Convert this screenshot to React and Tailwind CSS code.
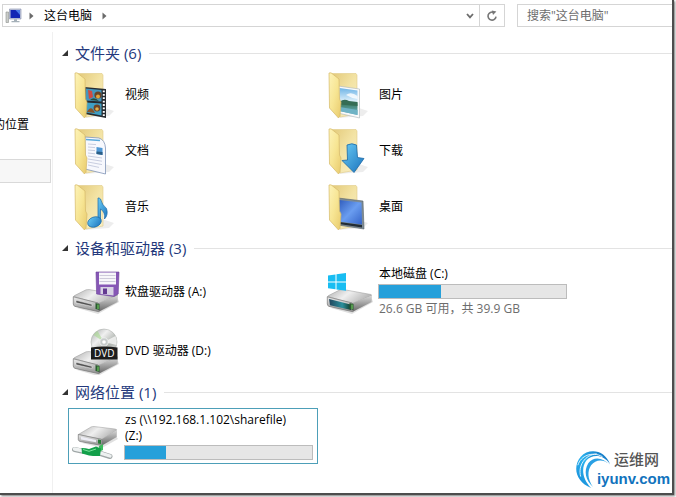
import React, { useState } from "react";

const folders = [
  { name: "视频", art: VideoArt },
  { name: "图片", art: PictureArt },
  { name: "文档", art: DocumentArt },
  { name: "下载", art: DownloadArt },
  { name: "音乐", art: MusicArt },
  { name: "桌面", art: DesktopArt },
];

// shared gradients, referenced by every icon below
function IconDefs() {
  return (
    <svg className="absolute h-0 w-0" aria-hidden="true">
      <defs>
        <linearGradient id="flap" x1="0" y1="0" x2="1" y2="1">
          <stop offset="0" stopColor="#fdf3b8" />
          <stop offset="0.5" stopColor="#f7e593" />
          <stop offset="1" stopColor="#e8ca6c" />
        </linearGradient>
        <linearGradient id="back" x1="0" y1="0" x2="1" y2="1">
          <stop offset="0" stopColor="#e2c877" />
          <stop offset="0.5" stopColor="#f3e3a4" />
          <stop offset="1" stopColor="#f8efc6" />
        </linearGradient>
        <linearGradient id="blue" x1="0" y1="0" x2="1" y2="1">
          <stop offset="0" stopColor="#6accf5" />
          <stop offset="1" stopColor="#1a72bd" />
        </linearGradient>
        <linearGradient id="screen" x1="0" y1="0" x2="1" y2="1">
          <stop offset="0" stopColor="#2f5cbc" />
          <stop offset="0.5" stopColor="#6a9df0" />
          <stop offset="1" stopColor="#3564c8" />
        </linearGradient>
        <linearGradient id="sky" x1="0" y1="0" x2="0" y2="1">
          <stop offset="0" stopColor="#6fb4e6" />
          <stop offset="0.5" stopColor="#dff1fb" />
          <stop offset="0.6" stopColor="#3f7f68" />
          <stop offset="1" stopColor="#6fb7cf" />
        </linearGradient>
        <linearGradient id="driveTop" x1="0" y1="0" x2="1" y2="0.4">
          <stop offset="0" stopColor="#b0b0b0" />
          <stop offset="0.5" stopColor="#efefef" />
          <stop offset="1" stopColor="#b5b5b5" />
        </linearGradient>
        <linearGradient id="driveSide" x1="0" y1="0" x2="0" y2="1">
          <stop offset="0" stopColor="#d8d8d8" />
          <stop offset="1" stopColor="#666" />
        </linearGradient>
        <linearGradient id="driveFront" x1="0" y1="0" x2="0" y2="1">
          <stop offset="0" stopColor="#ececec" />
          <stop offset="1" stopColor="#8e8e8e" />
        </linearGradient>
        <linearGradient id="systemFront" x1="0" y1="0" x2="1" y2="0">
          <stop offset="0" stopColor="#23455c" />
          <stop offset="0.6" stopColor="#2b8f9c" />
          <stop offset="1" stopColor="#123c2b" />
        </linearGradient>
        <linearGradient id="disc" x1="0" y1="0" x2="1" y2="1">
          <stop offset="0" stopColor="#9fa3a3" />
          <stop offset="0.35" stopColor="#f0f0f0" />
          <stop offset="0.65" stopColor="#b0b5b0" />
          <stop offset="1" stopColor="#e0e0e0" />
        </linearGradient>
        <linearGradient id="swirl" x1="1" y1="0" x2="0" y2="1">
          <stop offset="0" stopColor="#0d67b8" />
          <stop offset="0.5" stopColor="#2bb2ee" />
          <stop offset="1" stopColor="#1488d6" />
        </linearGradient>
      </defs>
    </svg>
  );
}

function FolderIcon({ children }) {
  return (
    <svg viewBox="0 0 48 48" className="h-12 w-12 shrink-0" aria-hidden="true">
      <path d="M13 47 L37 45 L42 40 L30 36 Z" fill="#000" opacity="0.07" />
      <path d="M4 2.5 L30 2.5 L31 4 L31 43 L14 46 Z" fill="url(#back)" stroke="#e0cb86" strokeWidth="0.6" />
      {children}
      <path d="M3 2 L5 1.8 L13 8 L13.5 28 L15 31 L14 45 L12.5 47 L3.5 37 Z" fill="url(#flap)" stroke="#d5b968" strokeWidth="0.7" />
    </svg>
  );
}

function VideoArt() {
  return (
    <g>
      <path d="M12 16 L34 18 L34 47 L13 43 Z" fill="#262b30" />
      <path d="M14 17.5 L29.5 19 L29.5 30.5 L14 29.5 Z" fill="#4596bd" />
      <path d="M14 31.5 L29.5 32.5 L29.5 44.5 L14 41.5 Z" fill="#3f9fc4" />
      <path d="M16 19 L20 20 L21 26 L17 28 Z" fill="#cf4a43" />
      <circle cx="26" cy="24" r="3.6" fill="#6b4326" />
      <circle cx="26" cy="25.5" r="2" fill="#e3a53c" />
      <path d="M18 29 Q22 25 27 30 Z" fill="#2b4d39" />
      <circle cx="25" cy="37" r="3.4" fill="#714424" />
      <circle cx="25" cy="38" r="1.8" fill="#e0b04c" />
      <path d="M15 41 Q19 33 23 42 Z" fill="#87542a" />
      <path d="M31.8 19.5 V45.5" stroke="#fff" strokeWidth="2" strokeDasharray="1.8 1.6" />
    </g>
  );
}

function PictureArt() {
  return (
    <g>
      <path d="M12 15 L33.5 18 L33.5 47 L12 42 Z" fill="#fafafa" stroke="#a9b5bb" strokeWidth="0.6" />
      <path d="M13.5 17 L31.5 19.5 L31.5 44 L13.5 40 Z" fill="url(#sky)" />
      <path d="M13.5 31 Q18 27 23 30 L31.5 31 V35 L13.5 33.5 Z" fill="#356d55" />
      <path d="M20 24 Q25 20 31.5 25 L31.5 28 Q25 27 20 24" fill="#fff" opacity="0.8" />
      <path d="M13.5 36 L31.5 39 V44 L13.5 40 Z" fill="#6fb3c5" />
    </g>
  );
}

function DocumentArt() {
  return (
    <g>
      <path d="M13 10 L27 11 Q33 13 33.5 21 L33.5 47 L13 42 Z" fill="#f7f8fd" stroke="#8094b8" strokeWidth="0.8" />
      <path d="M14 12.5 L28 13.5" stroke="#5aaadc" strokeWidth="1.3" />
      <path d="M16 17 L24 17.6 M16 20 L23 20.6 M16 23 L23 23.6 M16 26 L23 26.8 M16 29 L30 31 M16 32 L30 34.2 M16 35 L30 37.6 M16 38 L27 40.4" stroke="#c3c8dc" strokeWidth="0.9" />
      <path d="M24.5 20 L30.5 21 L30.5 28 L24.5 27 Z" fill="#4f97d4" />
      <path d="M24.5 24.5 L30.5 25 L30.5 28 L24.5 27 Z" fill="#2a5d86" />
    </g>
  );
}

function DownloadArt() {
  return (
    <path d="M21 18 Q26 15.5 30.5 18 L31.5 30.5 L38 31.5 L28 45.5 L16 33.5 L21.5 33 Z" fill="url(#blue)" stroke="#1b68a6" strokeWidth="0.8" />
  );
}

function MusicArt() {
  return (
    <g fill="url(#blue)" stroke="#1b68a6" strokeWidth="0.7">
      <path d="M26 15 Q27 14.5 28.5 16 Q30 22 34.5 25.5 Q36.5 32 32.5 36 Q33.5 29 28.5 26 L28.5 39 L26 39 Z" />
      <ellipse cx="22.5" cy="39" rx="7" ry="5" transform="rotate(-20 22.5 39)" />
    </g>
  );
}

function DesktopArt() {
  return (
    <g>
      <path d="M12 15 L37 18 L38 46 L12 42 Z" fill="#7d8b94" stroke="#55626a" strokeWidth="0.6" />
      <path d="M13 17 L35.5 19.5 L36 41.5 L13 38.5 Z" fill="url(#screen)" />
      <path d="M13 39 L36 42 L36 44.5 L13 41 Z" fill="#222c35" />
    </g>
  );
}

function DriveBody({ system }) {
  return (
    <g>
      <path d="M5 40 L26 46 L47 34 L46 31 Z" fill="#000" opacity="0.13" />
      <path d="M1.5 28.5 Q2 27.8 3 27.3 L14 21.8 L17 21.5 L45 26.5 Q46.5 27 45 28 L26.5 35.5 Z" fill="url(#driveTop)" stroke="#989898" strokeWidth="0.5" />
      <path d="M26.3 35.3 L46 27.5 L45.5 34 L26.8 43.7 Z" fill="url(#driveSide)" />
      <path d="M1.3 28.8 L26.3 35 L26.8 43.7 L3 38.4 Q1.5 38 1.3 36 Z" fill="url(#driveFront)" stroke="#777" strokeWidth="0.7" />
      {system ? (
        <path d="M3 31 L24.5 36.5 L25 42 L4 37.2 Z" fill="url(#systemFront)" />
      ) : (
        <path d="M4 32.3 L20 36.3 L20 38.4 L4 34.8 Z" fill="#505050" stroke="#fff" strokeWidth="0.5" />
      )}
      <path d="M23.5 35 L27.5 36 L27.5 42 L23.5 41 Z" fill="#2b5a30" />
      <path d="M26 36.5 V41" stroke="#7fdb6b" strokeWidth="1" />
    </g>
  );
}

function FloppyDriveIcon() {
  return (
    <svg viewBox="0 0 48 48" className="h-12 w-12 shrink-0" aria-hidden="true">
      <DriveBody />
      <path d="M24 4 L47 4 L46.2 26 L42 28.5 L24.6 26 Z" fill="#8657b5" stroke="#6a3f98" strokeWidth="0.6" />
      <path d="M27 4.5 H44 V16.5 H27 Z" fill="#f7f7fa" />
      <path d="M27.5 7.5 H43.5 M27.5 10.5 H43.5 M27.5 13.5 H43.5" stroke="#c3bfd3" strokeWidth="0.8" />
      <path d="M28.5 19 H41.5 V27.5 L28.5 26 Z" fill="#d7d2e4" />
      <path d="M31 20.5 H35 V26 H31 Z" fill="#633a91" />
    </svg>
  );
}

function SystemDriveIcon() {
  return (
    <svg viewBox="0 0 48 48" className="h-12 w-12 shrink-0" aria-hidden="true">
      <DriveBody system />
      <g fill="#18bdf2">
        <path d="M2 7.5 L9.5 6.5 V13.5 H2 Z" />
        <path d="M10.5 6.3 L20 5 V13.5 H10.5 Z" />
        <path d="M2 14.5 H9.5 V21.3 L2 20.3 Z" />
        <path d="M10.5 14.5 H20 V22.8 L10.5 21.5 Z" />
      </g>
    </svg>
  );
}

function DvdDriveIcon() {
  return (
    <svg viewBox="0 0 48 48" className="h-12 w-12 shrink-0" aria-hidden="true">
      <g transform="translate(0 3)">
        <DriveBody />
      </g>
      <circle cx="32" cy="15" r="13" fill="url(#disc)" stroke="#a5a8a5" strokeWidth="0.5" />
      <path d="M32 15 L21.5 8 A13 13 0 0 1 25.5 4 Z" fill="#a6d98f" opacity="0.6" />
      <path d="M32 15 L43.5 9 A13 13 0 0 1 44.5 18 Z" fill="#fff" opacity="0.7" />
      <circle cx="32" cy="15" r="4.2" fill="#c6cbcb" stroke="#f5f5f5" strokeWidth="0.8" />
      <circle cx="32" cy="15" r="1.8" fill="#fff" />
      <path d="M19 20.5 Q32 18.5 45.5 20.5 V32.5 H19 Z" fill="#1d1d1d" />
      <text x="32.3" y="30" textAnchor="middle" fontSize="10" fontWeight="400" fill="#fff" fontFamily="Open Sans, sans-serif">
        DVD
      </text>
    </svg>
  );
}

function NetworkDriveIcon() {
  return (
    <svg viewBox="0 0 48 48" className="h-12 w-12 shrink-0" aria-hidden="true">
      <path d="M10 31 L30 36 L46 27 L44 24 Z" fill="#000" opacity="0.12" />
      <path d="M6.3 22.5 L19 15 Q20 14.4 22 14.5 L43 17 Q45.5 17.5 44.5 18.5 L29.7 27.5 Z" fill="url(#driveTop)" stroke="#989898" strokeWidth="0.5" />
      <path d="M29.7 27.3 L45 18 L44.7 25 L30 33.5 Z" fill="url(#driveSide)" />
      <path d="M6.3 22.5 L29.7 27.3 L30 33.5 L8 29.5 Q6.5 29 6.3 27.5 Z" fill="url(#driveFront)" stroke="#777" strokeWidth="0.7" />
      <path d="M9 24.7 L24 28 L24 30.2 L9 27.5 Z" fill="#ededf5" />
      <path d="M26 27.5 L29 28 L29 32 L26 31.6 Z" fill="#2b7a38" />
      <path d="M2.5 37.5 L12 39.5 M27 41 L38 44.5" stroke="#9fa6a6" strokeWidth="5" strokeLinecap="round" />
      <path d="M2.5 37 L12 39 M27 40.6 L38 44" stroke="#eef1f1" strokeWidth="3.4" strokeLinecap="round" />
      <path d="M27 34 L31 32 L31 38 L27 40 Z" fill="#3dbb5e" />
      <path d="M9.5 36 Q14 36 17 37 L24 34.5 L29 36.5 L28 44 L21 44 L17 43.5 L10 41.5 Z" fill="#13a04a" />
      <path d="M11 37.5 L17 39.3 L24 37" stroke="#7be39c" strokeWidth="1" fill="none" />
    </svg>
  );
}

function ComputerIcon() {
  return (
    <svg viewBox="0 0 18 16" className="h-4 w-[18px] shrink-0" aria-hidden="true">
      <path d="M1 4 H3.5 V14.5 H1 Z" fill="#c9ccc9" stroke="#8d918d" strokeWidth="0.6" />
      <path d="M4.5 1 H16 V11 H4.5 Z" fill="#c5cbe0" stroke="#8189a8" strokeWidth="0.6" />
      <path d="M5.5 2 H15 V10 H5.5 Z" fill="#1226b4" />
      <path d="M10.5 2 H15 V7 Z" fill="#4a7ae8" />
      <path d="M9 11.2 H12 V13 H14.5 V14.2 H6.5 V13 H9 Z" fill="#a5b0b8" />
    </svg>
  );
}

function Crumb() {
  return (
    <svg viewBox="0 0 5 8" className="h-2 w-[5px] shrink-0" aria-hidden="true">
      <path d="M0.5 0.5 L4.5 4 L0.5 7.5 Z" fill="#6a6a6a" />
    </svg>
  );
}

function AddressBar() {
  const [query, setQuery] = useState("");

  return (
    <header className="flex h-[23px] gap-3 pl-[2px] text-xs">
      <nav className="flex flex-1 items-center border border-[#d5d5d5] pl-[2px]">
        <ComputerIcon />
        <button type="button" aria-label="展开" className="ml-[6px] flex">
          <Crumb />
        </button>
        <a href="#" className="ml-[10px] text-black">
          这台电脑
        </a>
        <button type="button" aria-label="展开这台电脑" className="ml-[10px] flex">
          <Crumb />
        </button>
        <button type="button" aria-label="以前的位置" className="ml-auto flex w-[19px] justify-center">
          <svg viewBox="0 0 8 6" className="h-[6px] w-2" aria-hidden="true">
            <path d="M1 1 L4 4.4 L7 1" fill="none" stroke="#6c6c6c" strokeWidth="1.8" />
          </svg>
        </button>
        <button
          type="button"
          aria-label="刷新"
          className="flex h-full w-[25px] items-center justify-center border-l border-[#d5d5d5]"
        >
          <svg viewBox="0 0 12 12" className="h-3 w-3" aria-hidden="true">
            <path d="M7.6 2.4 A4 4 0 1 0 10 6.6" fill="none" stroke="#777" strokeWidth="1.6" />
            <path d="M5.8 0.4 L10.4 1.4 L7 5 Z" fill="#777" />
          </svg>
        </button>
      </nav>
      <input
        type="text"
        aria-label="搜索"
        value={query}
        onChange={(e) => setQuery(e.target.value)}
        placeholder={'搜索"这台电脑"'}
        className="w-[155px] border border-r-0 border-[#d5d5d5] bg-white pl-[9px] text-xs placeholder:text-[#6d6d6d] focus:outline-none"
      />
    </header>
  );
}

function Section({ title, children }) {
  return (
    <section>
      <h2 className="flex h-5 items-center pl-[9px] text-[15px] leading-5 text-[#24397c]">
        <button type="button" className="flex items-center gap-[7px]">
          <svg viewBox="0 0 6 6" className="h-[6px] w-[6px]" aria-hidden="true">
            <path d="M6 0 V6 H0 Z" fill="#333" />
          </svg>
          {title}
        </button>
        <span className="ml-2 h-px flex-1 bg-[#e3e3e3]" />
      </h2>
      {children}
    </section>
  );
}

function UsageBar({ label, percent }) {
  return (
    <div
      role="progressbar"
      aria-label={label}
      aria-valuenow={percent}
      className="h-[15px] w-[189px] border border-[#bcbcbc] bg-[#e6e6e6]"
    >
      <div className="h-full bg-[#26a0da]" style={{ width: `${percent}%` }} />
    </div>
  );
}

function Watermark() {
  return (
    <div className="absolute right-[2px] bottom-1 flex items-end">
      <svg viewBox="0 0 38 42" className="-mr-[14px] h-10 w-9" aria-hidden="true">
        <path d="M37 16 C32 1 15 -2 6 8 C-3 19 1 35 17 41 C8 32 6 20 12 12 C18 5 30 5 37 16 Z" fill="url(#swirl)" />
        <path d="M37 17 C29 8 19 8 14 15 C9 23 11 33 19 40 C13 31 13 23 17 17 C22 11 30 10 37 17 Z" fill="#2aa0e4" />
        <path d="M3 17 C6 7 18 2 29 8 M6 29 C3 18 10 6 23 5" fill="none" stroke="#fff" strokeWidth="0.9" />
      </svg>
      <div className="flex flex-col">
        <span className="pl-[17px] text-[15px] leading-5 font-medium text-[#555]">运维网</span>
        <span className="font-['Liberation_Sans'] text-[15px] leading-5 font-bold text-[#1173bd]">iyunv.com</span>
      </div>
    </div>
  );
}

export default function App() {
  return (
    <div className="flex min-h-screen flex-col bg-white pr-[2px] pb-[2px] font-['Open_Sans','Noto_Sans_CJK_SC',sans-serif] text-black">
      <IconDefs />
      <div className="relative flex flex-1 flex-col overflow-hidden border-r-2 border-b-2 border-[#4d4d4d] pt-1 shadow-[1px_1px_2px_#777]">
        <AddressBar />

        <div className="flex flex-1 pt-[5px]">
          <aside className="flex w-[53px] shrink-0 flex-col overflow-hidden border-r border-[#f0f0f0] pt-[83px] text-xs">
            <a href="#" className="flex h-5 items-center justify-end pr-[23px] whitespace-nowrap">
              的位置
            </a>
            <a href="#" aria-label="这台电脑" className="mt-6 mr-px h-6 border border-l-0 border-[#d9d9d9] bg-[#f7f7f7]" />
          </aside>

          <main className="min-w-0 flex-1 pt-[11px] text-xs leading-4">
            <Section title="文件夹 (6)">
              <ul className="grid grid-cols-[254px_254px] pt-1 pl-[15px]">
                {folders.map(({ name, art: Art }) => (
                  <li key={name} className="flex h-14 items-center gap-[5px] pl-1">
                    <FolderIcon>
                      <Art />
                    </FolderIcon>
                    {name}
                  </li>
                ))}
              </ul>
            </Section>

            <div className="h-[3px]" />

            <Section title="设备和驱动器 (3)">
              <ul className="grid grid-cols-[254px_254px] pt-1 pl-[15px]">
                <li className="flex h-[59px] items-center gap-[5px] pl-1">
                  <FloppyDriveIcon />
                  软盘驱动器 (A:)
                </li>
                <li className="flex h-[59px] items-center gap-1 pl-1">
                  <SystemDriveIcon />
                  <div>
                    <div className="pb-[2px] pl-px">本地磁盘 (C:)</div>
                    <UsageBar label="本地磁盘 (C:)" percent={33} />
                    <div className="pt-[2px] pl-px text-[#6d6d6d]">26.6 GB 可用，共 39.9 GB</div>
                  </div>
                </li>
                <li className="flex h-[59px] items-center gap-[5px] pl-1">
                  <DvdDriveIcon />
                  DVD 驱动器 (D:)
                </li>
              </ul>
            </Section>

            <div className="h-[2px]" />

            <Section title="网络位置 (1)">
              <ul className="pt-[6px] pl-[15px]">
                <li className="flex h-14 w-[250px] items-center gap-1 border border-[#4d9fb8] pl-[3px]">
                  <NetworkDriveIcon />
                  <div>
                    <div className="pb-px pl-px">
                      zs (\\192.168.1.102\sharefile)
                      <br />
                      (Z:)
                    </div>
                    <UsageBar label="zs (Z:)" percent={22} />
                  </div>
                </li>
              </ul>
            </Section>
          </main>
        </div>

        <Watermark />
      </div>
    </div>
  );
}
